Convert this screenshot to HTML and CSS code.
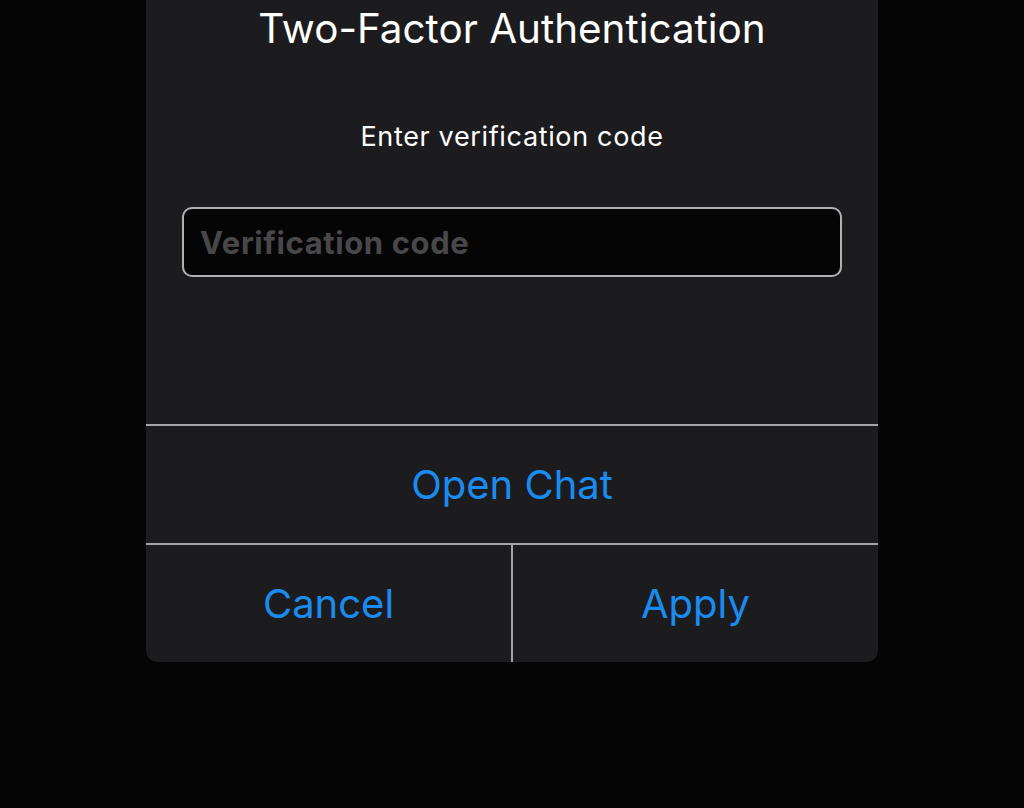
FILE: index.html
```html
<!DOCTYPE html>
<html lang="en">
<head>
<meta charset="utf-8">
<link rel="stylesheet" href="styles.css">
</head>
<body>
<div class="dialog">
  <div class="content">
    <h1 class="title">Two-Factor Authentication</h1>
    <p class="subtitle">Enter verification code</p>
    <div class="field"><span class="placeholder">Verification code</span></div>
  </div>
  <div class="action single">Open Chat</div>
  <div class="row">
    <div class="action half">Cancel</div>
    <div class="action half">Apply</div>
  </div>
</div>
</body>
</html>
```

FILE: styles.css
```css
html, body {
  margin: 0;
  padding: 0;
  background: #050505;
  height: 100%;
}
body {
  font-family: Inter, "Noto Sans", sans-serif;
  color: #ffffff;
}
.dialog {
  width: 732px;
  margin-left: 146px;
  background: #1c1c1e;
  border-radius: 0 0 12px 12px;
  overflow: hidden;
}
.content {
  height: 424px;
  display: flex;
  flex-direction: column;
  align-items: center;
  border-bottom: 2px solid #a5a5a7;
}
.title {
  margin: 4px 0 0;
  font-size: 40.4px;
  font-weight: 400;
  line-height: 50px;
  letter-spacing: 0;
}
.subtitle {
  margin: 67px 0 0;
  font-size: 27px;
  line-height: 32px;
  letter-spacing: 0.65px;
}
.field {
  margin-top: 54px;
  width: 660px;
  height: 70px;
  box-sizing: border-box;
  border: 2px solid #b2b2b4;
  border-radius: 10px;
  background: #050505;
  display: flex;
  align-items: center;
  padding-left: 16px;
}
.placeholder {
  font-size: 31px;
  font-weight: 700;
  letter-spacing: 0.6px;
  color: #48484a;
}
.action {
  color: #1a8cf0;
  font-size: 40px;
  display: flex;
  align-items: center;
  justify-content: center;
}
.single {
  height: 117px;
  border-bottom: 2px solid #a5a5a7;
}
.row {
  display: flex;
  height: 117px;
}
.half {
  flex: 1;
}
.half:first-child {
  border-right: 2px solid #a5a5a7;
}
```
